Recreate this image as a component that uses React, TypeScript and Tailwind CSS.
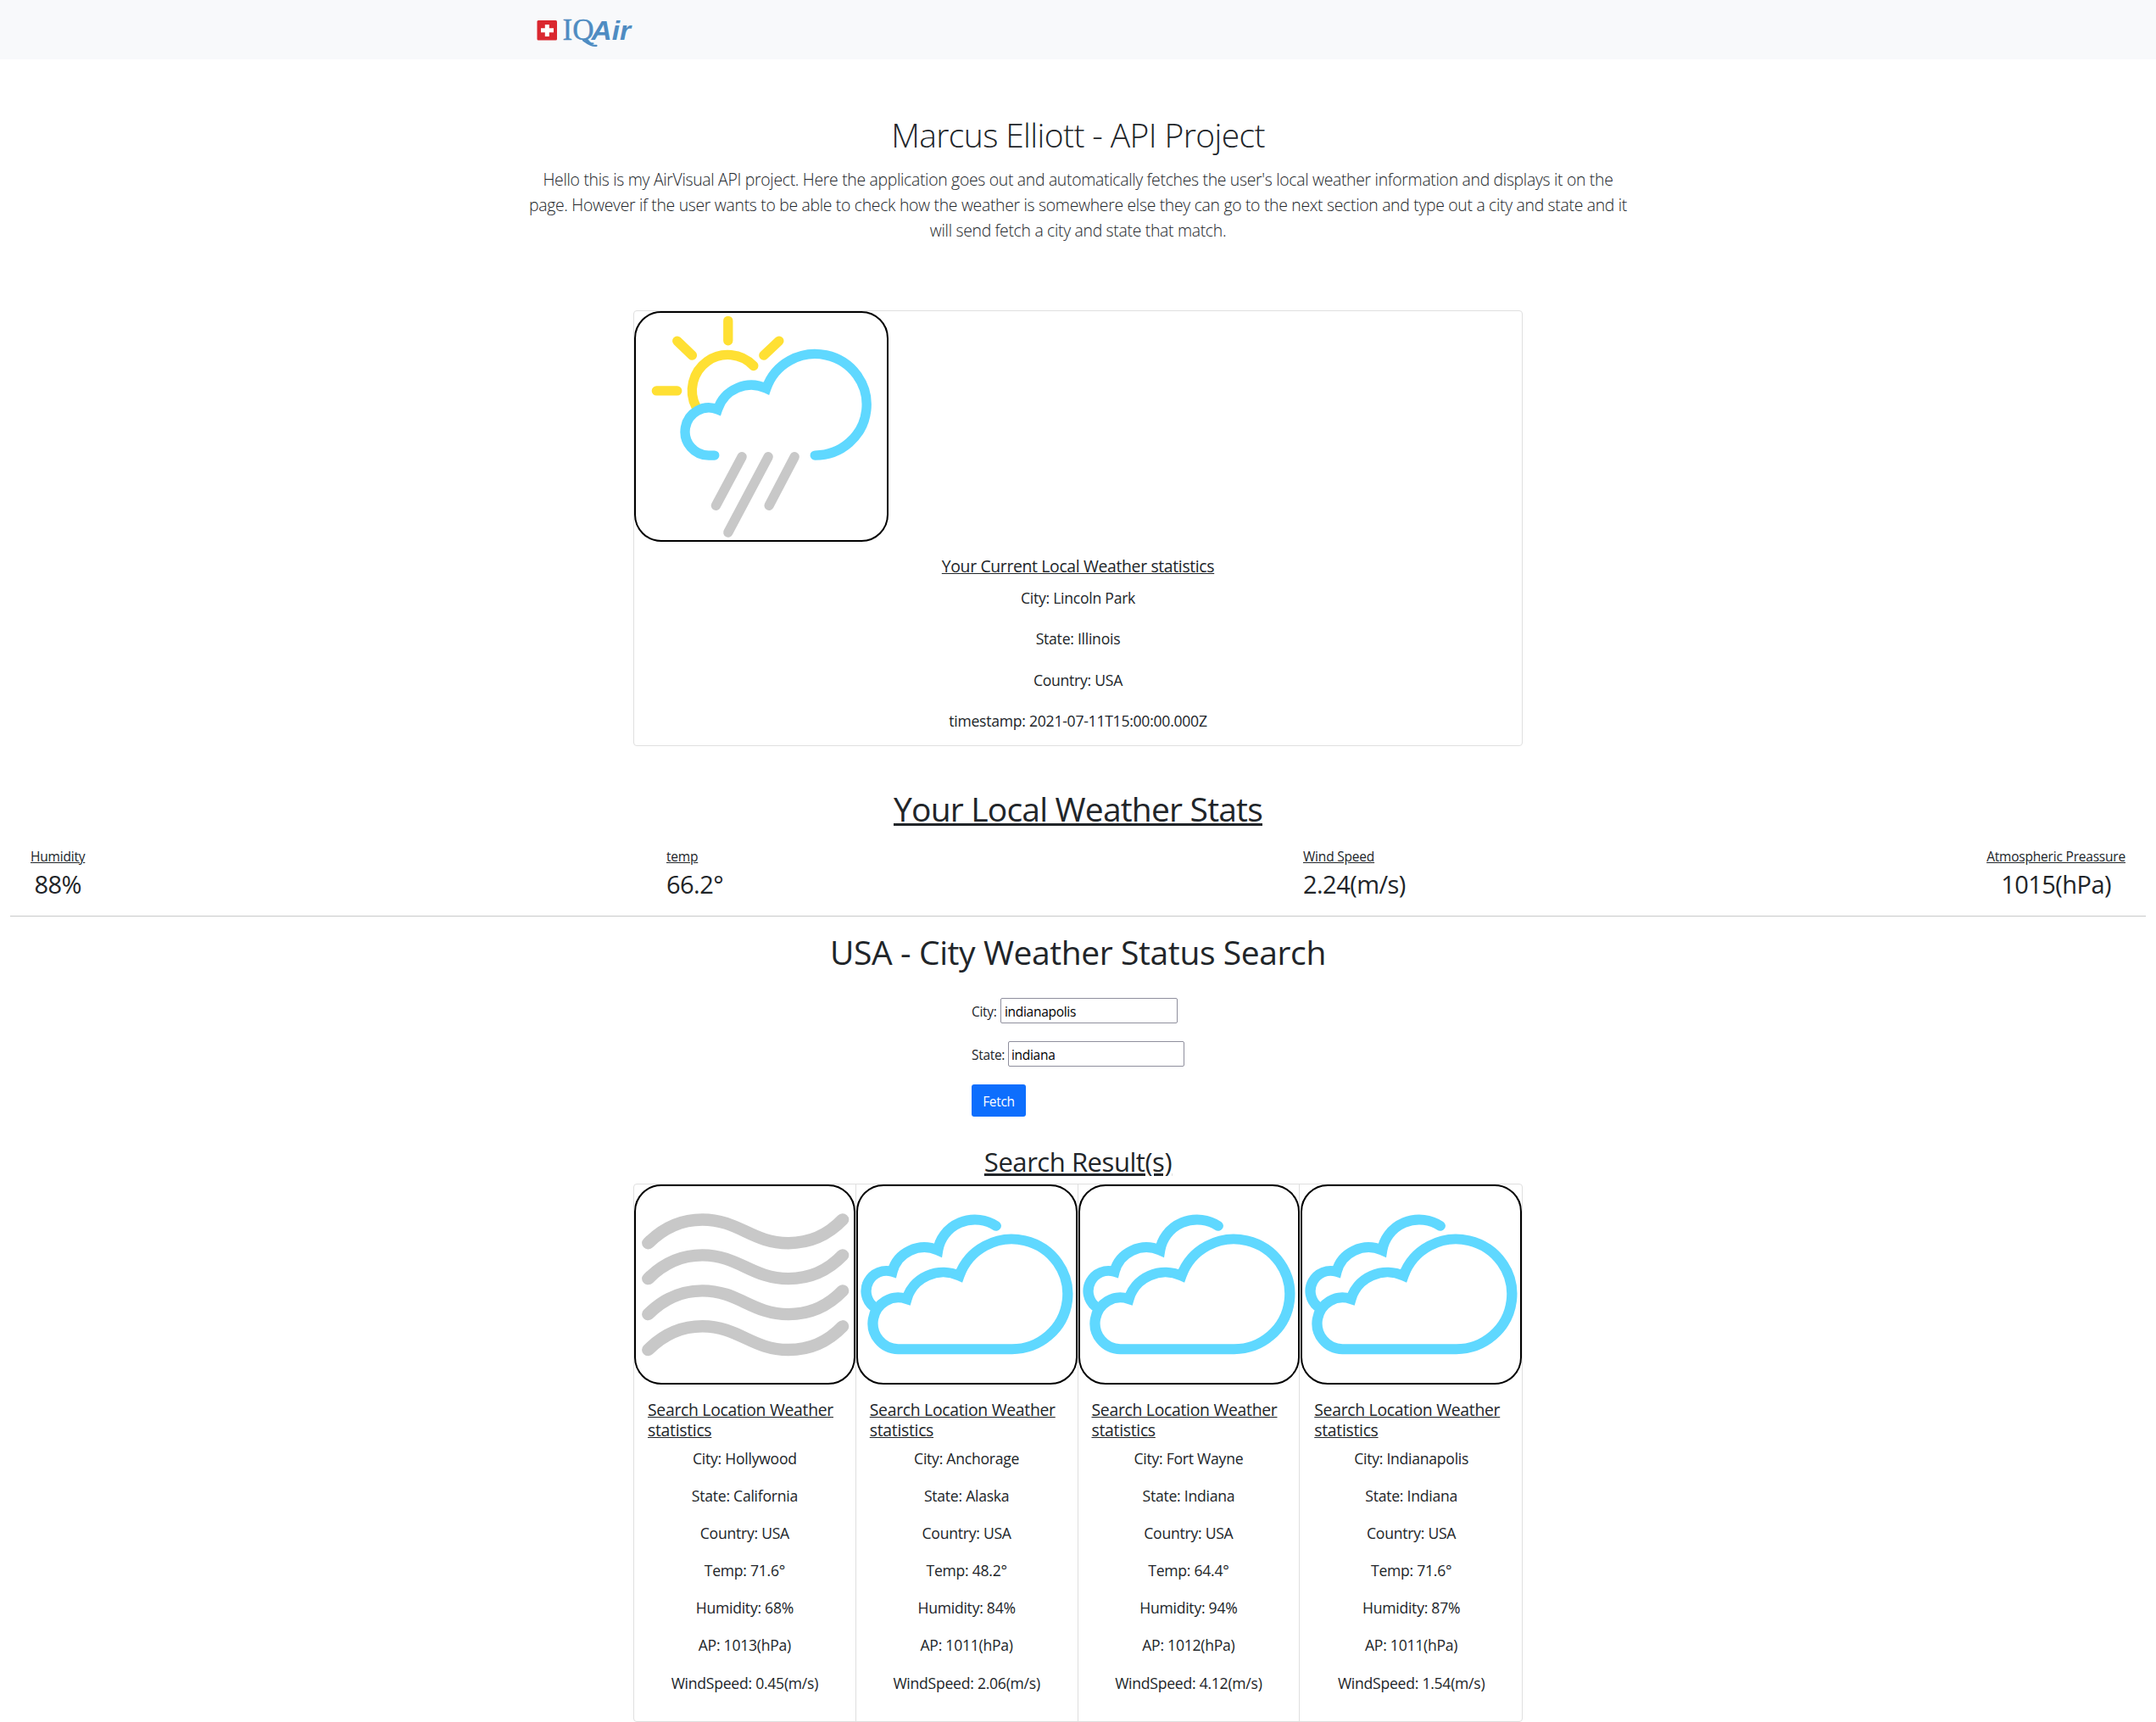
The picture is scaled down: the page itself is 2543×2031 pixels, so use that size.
import React from "react";

const localStats = [
  { label: "Humidity", value: "88%", centered: true },
  { label: "temp", value: "66.2°", centered: false },
  { label: "Wind Speed", value: "2.24(m/s)", centered: false },
  { label: "Atmospheric Preassure", value: "1015(hPa)", centered: true },
];

const localRows = [
  "City: Lincoln Park",
  "State: Illinois",
  "Country: USA",
  "timestamp: 2021-07-11T15:00:00.000Z",
];

const results = [
  { icon: "wind", city: "Hollywood", state: "California", temp: "71.6°", humidity: "68%", ap: "1013", wind: "0.45" },
  { icon: "cloud", city: "Anchorage", state: "Alaska", temp: "48.2°", humidity: "84%", ap: "1011", wind: "2.06" },
  { icon: "cloud", city: "Fort Wayne", state: "Indiana", temp: "64.4°", humidity: "94%", ap: "1012", wind: "4.12" },
  { icon: "cloud", city: "Indianapolis", state: "Indiana", temp: "71.6°", humidity: "87%", ap: "1011", wind: "1.54" },
];

function Logo() {
  return (
    <svg className="block h-[44px] w-[120px]" viewBox="0 0 120 44">
      <rect x="1.5" y="9" width="23.5" height="23.5" rx="1.5" fill="#da2830" />
      <path d="M13.3 14v14M6 20.8h15" stroke="#fff" strokeWidth="5" />
      <text x="31.5" y="32.3" fontFamily="Liberation Serif" fontSize="35" fill="#4f8cc2" stroke="#4f8cc2" strokeWidth="0.4" textLength="37" lengthAdjust="spacingAndGlyphs">IQ</text>
      <path d="M56 32.5C60 35 64 40 71.5 38.8" fill="none" stroke="#4f8cc2" strokeWidth="2.2" strokeLinecap="round" />
      <text x="65.5" y="32.3" fontFamily="Liberation Sans" fontSize="32" fontWeight="700" fontStyle="italic" fill="#4f8cc2" textLength="46.5" lengthAdjust="spacingAndGlyphs">Air</text>
    </svg>
  );
}

function SunRainIcon() {
  return (
    <svg className="block h-full w-full" viewBox="61 58 887 802" preserveAspectRatio="none" fill="none" strokeWidth="34" strokeLinecap="round">
      <path stroke="#ffe033" d="M387 86V156M207 157L260 208M567 157L513 208M134 333H207M477 245A126 126 0 0 0 274 390" />
      <path stroke="#5fd8ff" d="M339 561H322A84 84 0 1 1 350 399A125 125 0 0 1 522 325A182 179 0 1 1 694 561" />
      <path stroke="#c8c8c8" d="M436 566L344 738M529 566L387 833M622 566L532 738" />
    </svg>
  );
}

function WindIcon() {
  return (
    <svg className="block h-full w-full" viewBox="29 58 744 694" preserveAspectRatio="none" fill="none" stroke="#c8c8c8" strokeWidth="43" strokeLinecap="round">
      {[0, 125.5, 251, 376.5].map((y) => (
        <path key={y} transform={`translate(0 ${y})`} d="M71 259C125 203 190 176 256 176C380 176 425 259 550 259C620 259 685 230 735 176" />
      ))}
    </svg>
  );
}

function CloudIcon() {
  return (
    <svg className="block h-full w-full" viewBox="793 58 742 694" preserveAspectRatio="none" fill="none" stroke="#5fd8ff" strokeWidth="35.5" strokeLinecap="round">
      <path d="M1263 198A128 128 0 0 0 1065 284A112 112 0 0 0 910 360A69 71 0 0 0 845 482" />
      <path d="M930 633A87 91 0 1 1 959 456A129 128 0 0 1 1138 374A190 194 0 1 1 1315 633Z" />
    </svg>
  );
}

export default function App() {
  return (
    <div className="h-[2031px] w-[2543px] overflow-hidden bg-white font-['Open_Sans',sans-serif] text-[#212529]">
      <nav className="flex h-[70px] bg-[#f8f9fb] pt-[15px] pl-[632px]">
        <Logo />
      </nav>

      <header className="mx-auto w-[1320px] pt-[65px] text-center font-light">
        <h1 className="text-[39px] leading-[48px] tracking-[-0.62px]">Marcus Elliott - API Project</h1>
        <p className="mt-[14px] text-[19.4px] leading-[30px] tracking-[-0.31px] whitespace-nowrap">
          Hello this is my AirVisual API project. Here the application goes out and automatically fetches the user's local weather information and displays it on the
          <br />
          page. However if the user wants to be able to check how the weather is somewhere else they can go to the next section and type out a city and state and it
          <br />
          will send fetch a city and state that match.
        </p>
      </header>

      <section className="mx-auto mt-[79px] h-[514px] w-[1049px] rounded border border-[#dfdfdf]">
        <div className="h-[272px] w-[300px] rounded-[32px] border-2 border-black">
          <SunRainIcon />
        </div>
        <h5 className="mt-[17px] text-center text-[19.4px] leading-6 tracking-[-0.35px] underline">Your Current Local Weather statistics</h5>
        <div className="mt-px text-center text-[17.6px] tracking-[-0.26px]">
          {localRows.map((row) => (
            <p key={row} className="leading-[48.33px]">{row}</p>
          ))}
        </div>
      </section>

      <h1 className="mt-[50px] text-center text-[39px] leading-[48px] tracking-[-0.8px]">
        <span className="underline">Your Local Weather Stats</span>
      </h1>
      <section className="mt-5 grid grid-cols-[750px_751px_807px_163px] pl-[36px]">
        {localStats.map((s) => (
          <div key={s.label} className={s.centered ? "justify-self-start text-center last:justify-self-end" : "text-left"}>
            <h6 className="text-[15.5px] leading-6 tracking-[-0.2px] whitespace-nowrap underline">{s.label}</h6>
            <p className="mt-[3px] text-[29px] leading-9 tracking-[-0.55px] whitespace-nowrap">{s.value}</p>
          </div>
        ))}
      </section>
      <hr className="mx-3 mt-[19px] border-t border-[#c8c9ca]" />

      <h1 className="mt-[18px] text-center text-[39px] leading-[48px] tracking-[-0.4px]">USA - City Weather Status Search</h1>
      <form className="ml-[1146px] text-[15.5px] tracking-[-0.3px]">
        <div className="mt-[30px] flex h-[30px]">
          <label className="w-[34px] leading-[33px]">City:</label>
          <input className="h-[30px] w-[209px] rounded-[2px] border border-[#8f8f9d] px-1 pt-0.5 text-black" defaultValue="indianapolis" />
        </div>
        <div className="mt-[21px] flex h-[30px]">
          <label className="w-[43px] leading-[33px]">State:</label>
          <input className="h-[30px] w-[208px] rounded-[2px] border border-[#8f8f9d] px-[3px] pt-0.5 text-black" defaultValue="indiana" />
        </div>
        <button type="button" className="mt-[21px] block h-[38px] w-[64px] rounded-[3px] bg-[#0d6efd] pt-1 text-white">Fetch</button>
      </form>

      <h2 className="mt-[34px] text-center text-[31px] leading-[38px] tracking-[-0.45px]">
        <span className="underline">Search Result(s)</span>
      </h2>
      <section className="mx-auto mt-[7px] grid h-[635px] w-[1049px] grid-cols-4 divide-x divide-[#dfdfdf] rounded border border-[#dfdfdf]">
        {results.map((r) => (
          <article key={r.city} className="last:pl-px">
            <div className="h-[236px] w-[261px] rounded-[32px] border-2 border-black">
              {r.icon === "wind" ? <WindIcon /> : <CloudIcon />}
            </div>
            <h5 className="mt-[18px] pl-4 text-[19.4px] leading-6 tracking-[-0.3px] underline">
              Search Location Weather
              <br />
              statistics
            </h5>
            <div className="-mt-px text-center text-[17.6px] leading-[44.1px] tracking-[-0.26px]">
              <p>City: {r.city}</p>
              <p>State: {r.state}</p>
              <p>Country: USA</p>
              <p>Temp: {r.temp}</p>
              <p>Humidity: {r.humidity}</p>
              <p>AP: {r.ap}(hPa)</p>
              <p>WindSpeed: {r.wind}(m/s)</p>
            </div>
          </article>
        ))}
      </section>
    </div>
  );
}
